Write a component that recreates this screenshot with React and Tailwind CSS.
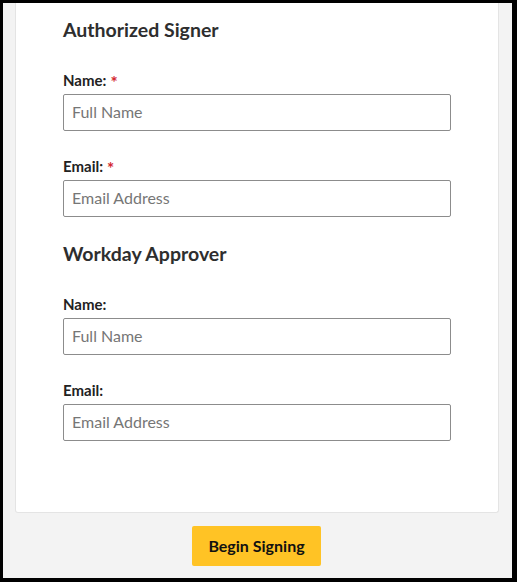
import React from "react";

const Field = ({ label, placeholder, required }) => (
  <div className="flex flex-col">
    <label className="h-[20px] text-[15px] leading-[20px] font-bold text-[#222222] mb-[4px]">
      {label}
      {required && (
        <span className="text-[#d3262f] ml-[4px] text-[17px] leading-[0] align-[-3px]">*</span>
      )}
    </label>
    <input
      type="text"
      placeholder={placeholder}
      className="h-[37px] w-full border border-[#8c8c8c] rounded-[2px] px-[8px] pb-[3px] text-[16px] text-[#333] placeholder:text-[#767676] outline-none bg-white"
    />
  </div>
);

const App = () => {
  return (
    <div
      className="w-[517px] h-[582px] bg-[#f3f3f3] border-black border-l-[3px] border-t-[3px] border-r-[5px] border-b-[4px] flex flex-col overflow-hidden"
      style={{ fontFamily: "Lato, 'Noto Sans', sans-serif" }}
    >
      {/* Card */}
      <div className="ml-[12px] mr-[13px] h-[510px] bg-white border-x border-b border-[#e4e4e4] rounded-b-[3px] px-[47px] pt-[15px]">
        <h2 className="text-[19.5px] leading-[24px] font-bold text-[#2e2e2e] mb-[28px]">
          Authorized Signer
        </h2>
        <Field label="Name:" placeholder="Full Name" required />
        <div className="h-[25px]" />
        <Field label="Email:" placeholder="Email Address" required />

        <h2 className="text-[19.5px] leading-[24px] font-bold text-[#2e2e2e] mt-[25px] mb-[28px]">
          Workday Approver
        </h2>
        <Field label="Name:" placeholder="Full Name" />
        <div className="h-[25px]" />
        <Field label="Email:" placeholder="Email Address" />
      </div>

      {/* Footer */}
      <div className="flex justify-center pt-[13px] pr-[2px]">
        <button
          type="button"
          className="w-[129px] h-[40px] bg-[#ffc325] rounded-[2px] text-[16px] font-bold text-[#111]"
        >
          Begin Signing
        </button>
      </div>
    </div>
  );
};

export default App;
